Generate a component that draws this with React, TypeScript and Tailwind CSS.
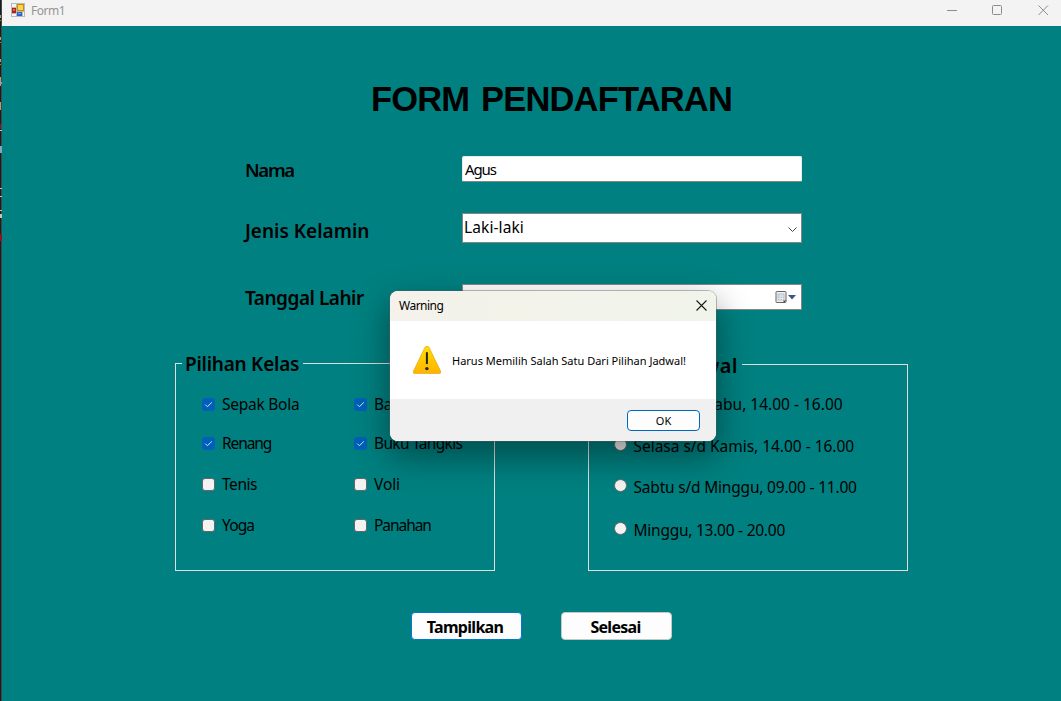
import React from "react";

function Check({ on }: { on?: boolean }) {
  return on ? (
    <span className="flex size-[13px] shrink-0 items-center justify-center rounded-[3px] bg-[#005fb8]">
      <svg width="13" height="13" viewBox="0 0 13 13" fill="none" stroke="#d5e6f5" strokeWidth="1">
        <path d="M3.3 6.6 5.4 8.7 9.8 4.4" />
      </svg>
    </span>
  ) : (
    <span className="size-[13px] shrink-0 rounded-[3px] border border-[#666] bg-[#f3f3f3]" />
  );
}

function CheckItem({ on, label, track }: { on?: boolean; label: string; track: string }) {
  return (
    <label className="flex h-[21px] items-center gap-[7px]">
      <Check on={on} />
      <span className={"text-[15.5px] leading-[21px] whitespace-nowrap " + track}>{label}</span>
    </label>
  );
}

function RadioItem({ label, track }: { label: string; track: string }) {
  return (
    <label className="flex h-[21px] items-center gap-[6.5px]">
      <span className="size-[13px] shrink-0 rounded-full border border-[#666] bg-[#f3f3f3]" />
      <span className={"pt-[4px] text-[15.5px] leading-[21px] whitespace-nowrap " + track}>{label}</span>
    </label>
  );
}

function TitleBar() {
  return (
    <header className="flex h-[26px] shrink-0 items-start bg-[#f3f3f3] pl-[9px]">
      <svg className="mt-[3px] shrink-0" width="14" height="14" viewBox="0 0 14 14">
        <rect width="14" height="14" fill="#b9b9b9" />
        <rect x="1" y="1" width="4" height="3" fill="#f4f4f4" />
        <rect x="1" y="11" width="4" height="2" fill="#f4f4f4" />
        <rect x="12" y="9" width="1" height="4" fill="#f4f4f4" />
        <rect x="1" y="5" width="4" height="5" fill="#b81c10" />
        <rect x="2" y="6" width="2" height="2" fill="#e8694f" />
        <rect x="6" y="1" width="7" height="7" fill="#c98d0a" />
        <rect x="7" y="2" width="5" height="5" fill="#ffd34d" />
        <rect x="6" y="9" width="5" height="4" fill="#2a62c8" />
        <rect x="7" y="10" width="3" height="1" fill="#79a8f2" />
      </svg>
      <span className="ml-[6px] text-[12px] leading-[22px] tracking-[-0.5px] text-[#959595]">Form1</span>
      <svg className="ml-auto mr-[12px] mt-[5px]" width="102" height="11" viewBox="0 0 102 11" fill="none" stroke="#8c8c8c">
        <path d="M0 5.5H10" />
        <rect x="45.5" y="0.5" width="9" height="9" rx="1" />
        <path d="M91.5 0.5 101 10M101 0.5 91.5 10" />
      </svg>
    </header>
  );
}

function Dialog() {
  return (
    <section className="absolute left-[390px] top-[291px] flex h-[150px] w-[326px] flex-col overflow-hidden rounded-[8px] bg-white shadow-[0_0_0_1px_rgba(90,90,90,0.4),0_14px_34px_2px_rgba(0,0,0,0.40)]">
      <div className="flex h-[30px] items-start justify-between bg-gradient-to-r from-[#f4f2ea] to-[#f1f4ea] pl-[9px] pr-[9px]">
        <span className="text-[12px] leading-[30px] tracking-[-0.5px]">Warning</span>
        <svg className="mt-[9px]" width="11" height="11" viewBox="0 0 11 11" stroke="#1a1a1a" strokeWidth="1.1">
          <path d="M0.5 0.5 10.5 10.5M10.5 0.5 0.5 10.5" />
        </svg>
      </div>
      <div className="flex h-[78px] items-start pl-[23px]">
        <svg className="mt-[25px] shrink-0" width="28" height="28" viewBox="0 0 28 28">
          <defs>
            <linearGradient id="warn" x1="0" y1="0" x2="0" y2="1">
              <stop offset="0" stopColor="#ffe000" />
              <stop offset="1" stopColor="#ffb300" />
            </linearGradient>
          </defs>
          <path d="M11.9 1.4Q14-1.2 16.1 1.4L27.6 25.2Q28.3 27.6 26 27.6H2Q-.3 27.6.4 25.2Z" fill="url(#warn)" stroke="#e09a00" strokeWidth=".6" />
          <path d="M13.9 6.2V18" stroke="#222" strokeWidth="2" />
          <circle cx="13.9" cy="22.6" r="1.7" fill="#222" />
        </svg>
        <span className="ml-[11px] text-[11px] leading-[80px] whitespace-nowrap">Harus Memilih Salah Satu Dari Pilihan Jadwal!</span>
      </div>
      <div className="flex h-[42px] items-start justify-end bg-[#f0f0f0] pr-[16px] pt-[11px]">
        <button className="flex h-[21px] w-[73px] items-center justify-center rounded-[4px] border border-[#0067c0] bg-[#fdfdfd] text-[11px] leading-[19px]">OK</button>
      </div>
    </section>
  );
}

export default function App() {
  return (
    <div className="relative flex h-[701px] w-[1061px] overflow-hidden bg-[#008080] font-['Noto_Sans','Open_Sans',sans-serif] text-black">
      <svg className="shrink-0" width="2" height="701" viewBox="0 0 2 701">
        <rect width="2" height="701" fill="#1c1c1c" />
        <rect x="1" width="1" height="701" fill="#3a4a4a" />
        <path d="M0 15h1v3H0zM0 37h1v3H0zM0 59h1v3H0zM0 77h1v9H0zM0 102h1v8H0z" fill="#b99b74" />
        <path d="M0 20h1v1H0zM0 42h1v1H0zM0 64h1v1H0z" fill="#b07d14" />
        <path d="M0 82h2v2H0zM0 146h2v7H0z" fill="#7fa8c0" />
        <path d="M0 124h1v5H0zM0 234h2v7H0z" fill="#8a1420" />
        <path d="M0 130h2v1H0zM0 188h2v1H0zM0 196h2v1H0zM0 210h2v1H0zM0 214h2v4H0z" fill="#c4c4b8" />
      </svg>
      <div className="flex flex-1 flex-col">
        <TitleBar />
        <main className="flex flex-1 flex-col">
          <h1 className="ml-[369px] mt-[51px] font-['Liberation_Sans',Arial,sans-serif] text-[34.5px] font-bold leading-[44px] tracking-[-0.82px] [word-spacing:3px] whitespace-nowrap">FORM PENDAFTARAN</h1>

          <div className="ml-[243px] mt-[35px] flex items-start">
            <span className="w-[217px] text-[18.5px] font-semibold leading-[27px] tracking-[-1.3px]">Nama</span>
            <div className="flex h-[26px] w-[340px] items-start rounded-[2px] border border-[#ececec] border-b-[#868686] bg-white pl-[2px]">
              <span className="text-[15px] leading-[25px] tracking-[-1.1px]">Agus</span>
            </div>
          </div>
          <div className="ml-[243px] mt-[30px] flex items-start">
            <span className="w-[217px] pt-[3px] text-[19px] font-semibold leading-[30px]">Jenis Kelamin</span>
            <div className="flex h-[30px] w-[340px] items-start justify-between border border-[#868686] bg-white pl-[1px] pr-[4px]">
              <span className="text-[15.5px] leading-[27px] tracking-[0.1px]">Laki-laki</span>
              <svg className="mt-[13px]" width="9" height="6" viewBox="0 0 9 6" fill="none" stroke="#444">
                <path d="M0.5 0.5 4.5 4.5 8.5 0.5" />
              </svg>
            </div>
          </div>
          <div className="ml-[243px] mt-[38px] flex items-start">
            <span className="w-[217px] pt-px text-[19px] font-semibold leading-[27px] tracking-[-0.48px]">Tanggal Lahir</span>
            <div className="flex h-[26px] w-[340px] items-start justify-end border border-[#868686] bg-white pr-[5px]">
              <svg className="mt-[6px]" width="21" height="13" viewBox="0 0 21 13">
                <rect x="1" y="0.5" width="10" height="11" rx=".6" fill="#f1f1f5" stroke="#6b6560" />
                <path d="M2.5 2.5h7v7h-7z" fill="#b7c0cf" />
                <path d="M3 5h6M3 7.5h6M5 3v6M7.2 3v6" stroke="#f5f6fa" strokeWidth=".7" />
                <path d="M8.5 12V9.5H11.5z" fill="#4a4642" />
                <path d="M13 4h8L17 8.5z" fill="#3b5488" />
              </svg>
            </div>
          </div>

          <div className="mt-[39px] flex items-start pl-[173px]">
            <fieldset className="h-[220px] w-[320px] border border-[#dedede]">
              <legend className="ml-[6px] h-[25px] w-[121px] pl-[3px] text-[19px] font-semibold leading-[27px] tracking-[-0.25px] whitespace-nowrap">Pilihan Kelas</legend>
              <div className="flex pl-[26px] pt-[18px]">
                <div className="flex w-[152px] flex-col">
                  <CheckItem on label="Sepak Bola" track="tracking-[-0.25px]" />
                  <div className="h-[18px]" />
                  <CheckItem on label="Renang" track="tracking-[-1.1px]" />
                  <div className="h-[20px]" />
                  <CheckItem label="Tenis" track="tracking-[-0.45px]" />
                  <div className="h-[20px]" />
                  <CheckItem label="Yoga" track="tracking-[-0.85px]" />
                </div>
                <div className="flex flex-col">
                  <CheckItem on label="Basket" track="tracking-[-0.3px]" />
                  <div className="h-[18px]" />
                  <CheckItem on label="Buku Tangkis" track="tracking-[-0.68px]" />
                  <div className="h-[20px]" />
                  <CheckItem label="Voli" track="tracking-[-0.1px]" />
                  <div className="h-[20px]" />
                  <CheckItem label="Panahan" track="tracking-[-1.05px]" />
                </div>
              </div>
            </fieldset>
            <fieldset className="ml-[93px] mt-px h-[219px] w-[320px] border border-[#dedede]">
              <legend className="ml-[6px] h-[25px] w-[147px] pl-[3px] text-[20px] font-semibold leading-[27px] tracking-[0.25px] whitespace-nowrap">Pilihan Jadwal</legend>
              <div className="flex flex-col pl-[25px] pt-[15px]">
                <RadioItem label="Senin s/d Rabu, 14.00 - 16.00" track="tracking-normal" />
                <div className="h-[21px]" />
                <RadioItem label="Selasa s/d Kamis, 14.00 - 16.00" track="tracking-[-0.03px]" />
                <div className="h-[20px]" />
                <RadioItem label="Sabtu s/d Minggu, 09.00 - 11.00" track="tracking-[-0.2px]" />
                <div className="h-[22px]" />
                <RadioItem label="Minggu, 13.00 - 20.00" track="tracking-[-0.25px]" />
              </div>
            </fieldset>
          </div>

          <div className="mt-[41px] flex items-start gap-[39px] pl-[409px]">
            <button className="h-[28px] w-[111px] rounded-[4px] border border-[#0078d4] bg-[#fdfdfd] pr-[3px] pt-px text-[16px] font-bold leading-[26px] tracking-[-0.7px]">Tampilkan</button>
            <button className="h-[28px] w-[111px] rounded-[4px] border border-[#c8c8c8] bg-[#fdfdfd] pr-[2px] pt-px text-[16px] font-bold leading-[26px] tracking-[-0.7px]">Selesai</button>
          </div>
        </main>
      </div>
      <Dialog />
    </div>
  );
}
